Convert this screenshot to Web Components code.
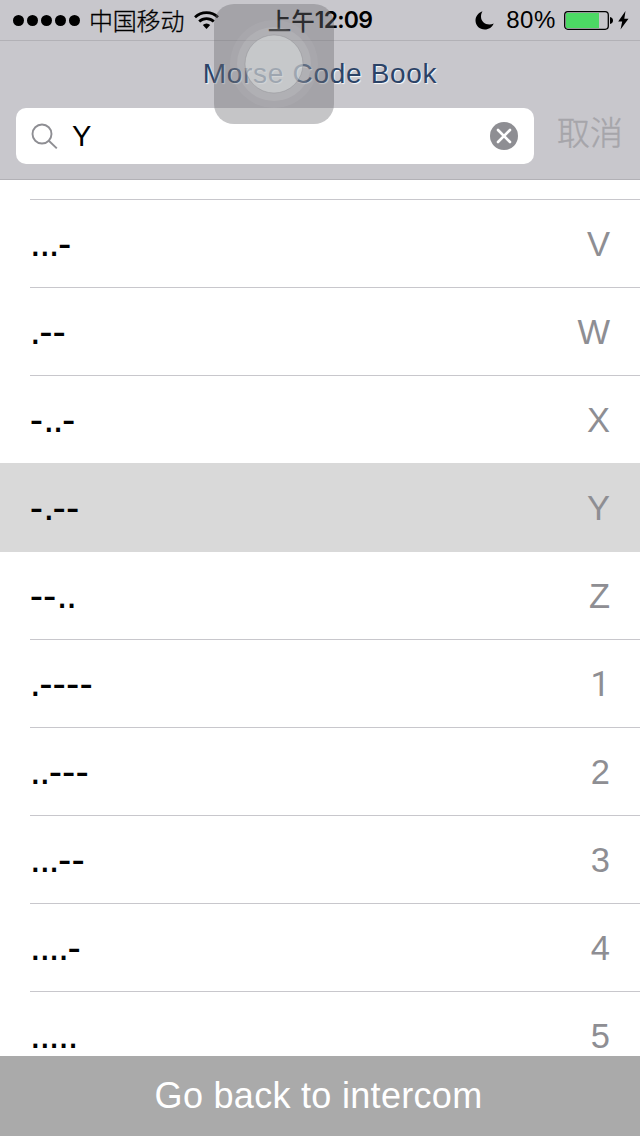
<!DOCTYPE html>
<html lang="zh-CN">
<head>
<meta charset="utf-8">
<title>Morse Code Book</title>
<style>
  body {
    margin: 0;
    width: 640px;
    height: 1136px;
    overflow: hidden;
    background: #fff;
    font-family: "Liberation Sans", "Noto Sans CJK SC", sans-serif;
  }
</style>
</head>
<body>

<morse-app></morse-app>

<template id="status-bar-template">
  <style>
    :host {
      display: flex;
      align-items: center;
      height: 40px;
      box-sizing: border-box;
      padding: 0 11px 0 13px;
      font-size: 24px;
      line-height: 40px;
      color: #000;
    }
    svg { display: block; flex: none; }
    .side { display: flex; align-items: center; flex: 1; }
    .right { justify-content: flex-end; }
    .carrier {
      font-family: "Noto Sans CJK SC", sans-serif;
      font-weight: 300;
      margin: 0 10px 0 8px;
      letter-spacing: -.2px;
      -webkit-text-stroke: .3px #000;
    }
    .time {
      display: flex;
      margin-left: -2px;
      font-family: Inter, "Noto Sans CJK SC", sans-serif;
      font-weight: 600;
      font-size: 23px;
      letter-spacing: -.8px;
      line-height: 42px;
    }
    .time span { font-family: "Noto Sans CJK SC", sans-serif; font-weight: 500; font-size: 23.5px; letter-spacing: 0; }
    .level { margin: 0 8px 0 11px; line-height: 42px; letter-spacing: .6px; }
    .bolt { margin-left: 4px; }
  </style>
  <div class="side">
    <svg width="68" height="40" viewBox="0 0 68 40"><circle cx="5.5" cy="20.5" r="5.5"/><circle cx="19.5" cy="20.5" r="5.5"/><circle cx="33.5" cy="20.5" r="5.5"/><circle cx="47.5" cy="20.5" r="5.5"/><circle cx="61.5" cy="20.5" r="5.5"/></svg>
    <span class="carrier"><slot name="carrier"></slot></span>
    <svg width="26" height="40" viewBox="0 0 26 40" fill="none" stroke="#000" stroke-width="2.7">
      <path d="M1 17.2a16.5 16.5 0 0 1 23 0"/>
      <path d="M5.2 21.5a10.5 10.5 0 0 1 14.6 0"/>
      <path d="M8.8 25a5.3 5.3 0 0 1 7.4 0L12.5 28.9z" fill="#000" stroke="none"/>
    </svg>
  </div>
  <div class="time"><span><slot name="period"></slot></span><slot name="time"></slot></div>
  <div class="side right">
    <svg width="20" height="40" viewBox="0 0 20 40"><path d="M7.5 11.3C3.2 12.8.5 16.5.5 20.6c0 5 4 9 9.3 9 4 0 7.500-2.300 8.900-6-1.300.7-2.800 1-4.300 1-4.800 0-8.400-3.500-8.400-8 0-2 .5-3.800 1.500-5.300z"/></svg>
    <span class="level"><slot name="level"></slot></span>
    <svg width="50" height="40" viewBox="0 0 50 40">
      <rect x=".7" y="11.7" width="43.6" height="17.6" rx="3.2" fill="none" stroke="#000" stroke-width="1.3"/>
      <rect x="2" y="13" width="33" height="15" fill="#4cd964"/>
      <path d="M46 17c2 .5 3 1.8 3 3.5s-1 3-3 3.5z"/>
    </svg>
    <svg class="bolt" width="11" height="40" viewBox="0 0 11 40"><path d="M7.5 11L.2 21.500h4L2.500 29.500 10.500 18.700H6.300z"/></svg>
  </div>
</template>

<template id="nav-title-template">
  <style>
    :host {
      display: flex;
      justify-content: center;
      height: 67px;
      box-sizing: border-box;
      border-top: 1px solid #b2b1b6;
      font-size: 28px;
      line-height: 66px;
      color: #2b4367;
      letter-spacing: .7px;
      text-shadow: 1px 1px 1px rgba(255, 255, 255, .9);
      white-space: nowrap;
    }
  </style>
  <slot></slot>
</template>

<template id="search-bar-template">
  <style>
    :host {
      display: flex;
      height: 73px;
      box-sizing: border-box;
      padding: 1px 16px 15px;
      border-bottom: 1px solid #b2b1b6;
    }
    .field {
      display: flex;
      align-items: center;
      width: 518px;
      height: 56px;
      box-sizing: border-box;
      padding: 0 16px 0 15px;
      border-radius: 10px;
      background: #fff;
      font-size: 29px;
      line-height: 54px;
    }
    .query { flex: 1; margin-left: 14px; }
    .cancel {
      margin-left: 23px;
      font-family: "Noto Sans CJK SC", sans-serif;
      font-weight: 300;
      font-size: 33px;
      line-height: 47px;
      color: #a6a5aa;
      -webkit-text-stroke: .4px #a6a5aa;
      white-space: nowrap;
    }
    svg { display: block; }
  </style>
  <div class="field">
    <svg width="27" height="27" viewBox="0 0 27 27" fill="none" stroke="#8e8e93" stroke-width="1.9"><circle cx="11" cy="11" r="9.5"/><path d="M17.8 17.8l8 7.6"/></svg>
    <span class="query"><slot></slot></span>
    <svg width="28" height="28" viewBox="0 0 28 28"><circle cx="14" cy="14" r="14" fill="#8e8e93"/><path d="M8 8l12 12M20 8L8 20" stroke="#fff" stroke-width="2.6" stroke-linecap="round"/></svg>
  </div>
  <span class="cancel"><slot name="cancel"></slot></span>
</template>

<template id="morse-row-template">
  <style>
    :host {
      display: block;
      padding-left: 30px;
      flex: none;
    }
    .cell {
      display: flex;
      align-items: center;
      justify-content: space-between;
      height: 88px;
      box-sizing: border-box;
      padding-right: 30px;
      border-bottom: 1px solid #c8c7cc;
    }
    .code {
      margin: -2px 0 0 -.3px;
      font-size: 40px;
      line-height: 36px;
      color: #000;
      white-space: nowrap;
    }
    .dash { letter-spacing: .1px; }
    .dot { letter-spacing: -1.66px; vertical-align: 1px; }
    .value {
      font-size: 34.5px;
      line-height: 38px;
      color: #8e8e93;
    }
    /* a numeral one without a foot */
    .value.one { font-family: Roboto, sans-serif; }
    :host([selected]) {
      background: #d9d9d9;
      margin-top: -1px;
      padding-top: 1px;
    }
    :host([selected]) .cell { border-color: #d9d9d9; }
  </style>
  <div class="cell">
    <span class="code"></span>
    <span class="value"><slot></slot></span>
  </div>
</template>

<template id="tool-button-template">
  <style>
    :host {
      display: flex;
      justify-content: center;
      flex: none;
      height: 80px;
      box-sizing: border-box;
      padding-right: 3px;
      background: #aaa;
      color: #fff;
      font-size: 36px;
      line-height: 80px;
      letter-spacing: .3px;
    }
  </style>
  <slot></slot>
</template>

<template id="touch-button-template">
  <style>
    :host {
      display: block;
      position: absolute;
      left: 214px;
      top: 4px;
      width: 120px;
      height: 120px;
      border-radius: 20px;
      background: rgba(110, 110, 114, .4);
    }
    svg { display: block; }
  </style>
  <svg width="120" height="120" viewBox="0 0 120 120">
    <circle cx="60" cy="60" r="44" fill="#fff" fill-opacity=".05"/>
    <circle cx="60" cy="60" r="37" fill="#fff" fill-opacity=".1"/>
    <circle cx="60" cy="60" r="29" fill="#dcdfe0" fill-opacity=".5" stroke="#8c8c90" stroke-opacity=".4" stroke-width="1"/>
  </svg>
</template>

<template id="morse-app-template">
  <style>
    :host {
      display: flex;
      flex-direction: column;
      position: relative;
      width: 640px;
      height: 1136px;
    }
    header { flex: none; background: #c8c7cc; }
    .list {
      display: flex;
      flex-direction: column;
      flex: 1;
      min-height: 0;
      overflow: hidden;
    }
    .lead { flex: none; height: 19px; margin-left: 30px; border-bottom: 1px solid #c8c7cc; }
  </style>
  <header>
    <status-bar>
      <span slot="carrier">中国移动</span>
      <span slot="period">上午</span>
      <span slot="time">12:09</span>
      <span slot="level">80%</span>
    </status-bar>
    <nav-title>Morse Code Book</nav-title>
    <search-bar>Y<span slot="cancel">取消</span></search-bar>
  </header>
  <div class="list">
    <div class="lead"></div>
    <morse-row code="...-">V</morse-row>
    <morse-row code=".--">W</morse-row>
    <morse-row code="-..-">X</morse-row>
    <morse-row code="-.--" selected>Y</morse-row>
    <morse-row code="--..">Z</morse-row>
    <morse-row code=".----">1</morse-row>
    <morse-row code="..---">2</morse-row>
    <morse-row code="...--">3</morse-row>
    <morse-row code="....-">4</morse-row>
    <morse-row code=".....">5</morse-row>
  </div>
  <tool-button>Go back to intercom</tool-button>
  <touch-button></touch-button>
</template>

<script>
  class TemplateElement extends HTMLElement {
    constructor() {
      super();
      const template = document.getElementById(`${this.localName}-template`);
      this.attachShadow({mode: 'open'}).appendChild(template.content.cloneNode(true));
    }
  }

  customElements.define('status-bar', class extends TemplateElement {});
  customElements.define('nav-title', class extends TemplateElement {});
  customElements.define('search-bar', class extends TemplateElement {});
  customElements.define('tool-button', class extends TemplateElement {});
  customElements.define('touch-button', class extends TemplateElement {});

  customElements.define('morse-row', class extends TemplateElement {
    connectedCallback() {
      // dots and dashes are spaced differently, so each run gets its own span
      const runs = this.getAttribute('code').match(/\.+|-+/g);
      this.shadowRoot.querySelector('.code').innerHTML = runs
        .map(run => `<span class="${run[0] === '.' ? 'dot' : 'dash'}">${run}</span>`)
        .join('');
      this.shadowRoot.querySelector('.value').classList.toggle('one', this.textContent === '1');
    }
  });

  customElements.define('morse-app', class extends TemplateElement {});
</script>
</body>
</html>
